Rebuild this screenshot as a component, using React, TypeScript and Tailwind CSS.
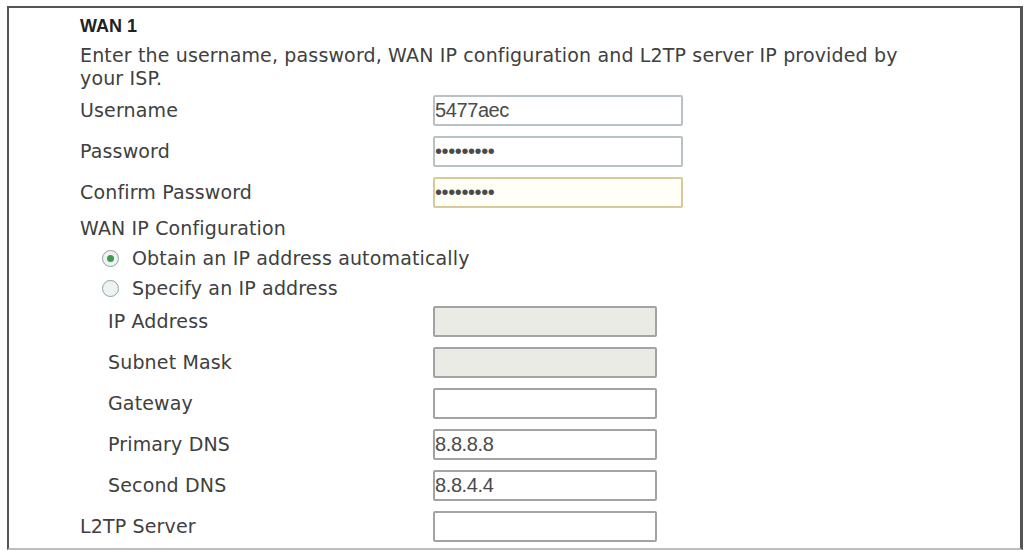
import React from "react";

const labelFont = { fontFamily: '"DejaVu Sans", Verdana, sans-serif' };
const inputFont = { fontFamily: '"Liberation Sans", Arial, sans-serif' };

type BoxKind = "plain" | "focus" | "disabled" | "sub";

function Field({
  value = "",
  kind = "plain",
  password = false,
  wide = true,
}: {
  value?: string;
  kind?: BoxKind;
  password?: boolean;
  wide?: boolean;
}) {
  const tone = {
    plain: "border-[#b9c2c7] bg-white",
    focus: "border-[#d6cb98] bg-[#fffef7]",
    disabled: "border-[#a3a3a3] bg-[#ebebe6]",
    sub: "border-[#a3a3a3] bg-white",
  }[kind];

  return (
    <input
      readOnly
      type={password ? "password" : "text"}
      value={value}
      disabled={kind === "disabled"}
      style={inputFont}
      className={`${wide ? "w-[250px]" : "w-[224px]"} h-[31px] rounded-[2px] border-2 ${tone} px-0 text-[20px] tracking-[-0.4px] text-[#4a4a4a] outline-none`}
    />
  );
}

function Row({
  label,
  indent = false,
  children,
}: {
  label: string;
  indent?: boolean;
  children: React.ReactNode;
}) {
  return (
    <div className="grid h-[41px] grid-cols-[353px_1fr] items-center">
      <span className={indent ? "pl-[28px]" : ""}>{label}</span>
      <div className="flex items-center">{children}</div>
    </div>
  );
}

function Radio({ checked, label }: { checked?: boolean; label: string }) {
  return (
    <div className="flex h-[30px] items-center gap-[13px] pl-[22px]">
      <span className="flex h-[17px] w-[17px] items-center justify-center rounded-full border-[1.5px] border-[#8fa0a6] bg-[#eef2f3]">
        {checked && <span className="h-[7px] w-[7px] rounded-full bg-[#3f9a4a]" />}
      </span>
      <span>{label}</span>
    </div>
  );
}

export default function App() {
  return (
    <div className="h-[551px] w-[1026px] bg-white pl-[7px] pt-[6px]">
      <div
        style={labelFont}
        className="h-[544px] w-[1016px] border-2 border-r-[3px] border-[#555] border-b-[#bdbdbd] pl-[71px] text-[19px] tracking-[0.15px] text-[#404040]"
      >
        <div className="flex h-[28px] items-end pb-[1px]">
          <span
            style={inputFont}
            className="text-[18px] font-bold leading-none tracking-normal text-[#222]"
          >
            WAN 1
          </span>
        </div>
        <p className="w-[840px] pt-[8px] leading-[23px]">
          Enter the username, password, WAN IP configuration and L2TP server IP
          provided by your ISP.
        </p>

        <Row label="Username">
          <Field value="5477aec" />
        </Row>
        <Row label="Password">
          <Field value="123456789" password />
        </Row>
        <Row label="Confirm Password">
          <Field value="123456789" password kind="focus" />
        </Row>

        <div className="flex h-[30px] items-center">WAN IP Configuration</div>
        <Radio checked label="Obtain an IP address automatically" />
        <div className="-mb-[2px]">
          <Radio label="Specify an IP address" />
        </div>

        <Row label="IP Address" indent>
          <Field kind="disabled" wide={false} />
        </Row>
        <Row label="Subnet Mask" indent>
          <Field kind="disabled" wide={false} />
        </Row>
        <Row label="Gateway" indent>
          <Field kind="sub" wide={false} />
        </Row>
        <Row label="Primary DNS" indent>
          <Field value="8.8.8.8" kind="sub" wide={false} />
        </Row>
        <Row label="Second DNS" indent>
          <Field value="8.8.4.4" kind="sub" wide={false} />
        </Row>
        <Row label="L2TP Server">
          <Field kind="sub" wide={false} />
        </Row>
      </div>
    </div>
  );
}
